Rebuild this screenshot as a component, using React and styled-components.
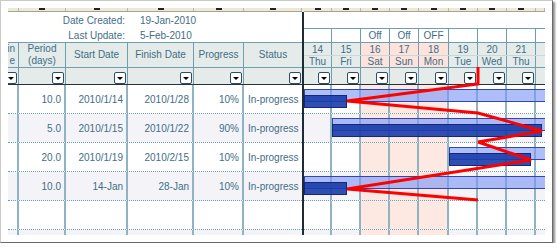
import React from 'react'
import styled, { createGlobalStyle } from 'styled-components'

const GlobalStyle = createGlobalStyle`
  html, body { margin: 0; padding: 0; background: #fff; }
`

const Frame = styled.div`
  box-sizing: border-box;
  width: 553px;
  height: 243px;
  padding: 7px;
  background: #fff;
  border: 1px solid #cacaca;
  border-right-color: #6a6a6a;
  border-bottom-color: #6a6a6a;
  box-shadow: 2px 2px 2px rgba(0, 0, 0, 0.45);
`

const Sheet = styled.div`
  position: relative;
  display: flex;
  width: 537px;
  height: 227px;
  overflow: hidden;
  font-family: "Liberation Sans", Arial, sans-serif;
  font-size: 10px;
  color: #3f6e87;
`

const Pane = styled.div`
  display: flex;
  flex-direction: column;
  flex-shrink: 0;
  width: ${p => p.w}px;
  overflow: hidden;
`

const Divider = styled.div`
  flex-shrink: 0;
  width: 2px;
  background: #1e2b36;
  border-top: 4px solid #ece9d8;
`

const Strip = styled.div`
  display: flex;
  flex-shrink: 0;
  height: 3px;
  background: #ece9d8;
  border-bottom: 1px solid #a5a28f;
`

const StripCell = styled.div`
  box-sizing: border-box;
  flex-shrink: 0;
  width: ${p => p.w}px;
  border-right: 1px solid #b9b6a4;
  display: flex;
  justify-content: center;
`

const Tick = styled.span`
  width: 6px;
  height: 2px;
  background: #222;
`

const Info = styled.div`
  display: grid;
  flex-shrink: 0;
  height: 30px;
  grid-template-rows: 16px 14px;
  grid-template-columns: 117px auto;
  column-gap: 15px;
  align-items: center;
  white-space: nowrap;
`

const InfoLabel = styled.span`
  text-align: right;
`

const HeaderRow = styled.div`
  display: flex;
  flex-shrink: 0;
  box-sizing: border-box;
  height: 25px;
  border-top: 1px solid #6f9db1;
  background: #e4ebe9;
`

const HeadCell = styled.div`
  box-sizing: border-box;
  flex-shrink: 0;
  width: ${p => p.w}px;
  border-right: ${p => (p.last ? 'none' : '1px solid #6f9db1')};
  display: flex;
  align-items: center;
  justify-content: ${p => (p.right ? 'flex-end' : 'center')};
  padding-right: ${p => (p.right ? '3px' : '0')};
  text-align: ${p => (p.right ? 'right' : 'center')};
  line-height: 12px;
  white-space: pre;
  overflow: hidden;
`

const FilterRow = styled.div`
  display: flex;
  flex-shrink: 0;
  box-sizing: border-box;
  height: 18px;
  border-top: 1px solid #6f9db1;
  border-bottom: 1px solid #26313a;
  background: #e4ebe9;
`

const FilterCell = styled.div`
  box-sizing: border-box;
  flex-shrink: 0;
  width: ${p => p.w}px;
  border-right: ${p => (p.last ? 'none' : '1px solid #6f9db1')};
  display: flex;
  justify-content: flex-end;
  align-items: flex-end;
  padding-right: 1px;
  overflow: hidden;
`

const DropButton = styled.span`
  box-sizing: border-box;
  flex-shrink: 0;
  width: 12px;
  height: 12px;
  background: #fff;
  border: 1px solid #2d4b6b;
  border-radius: 2px;
  display: flex;
  align-items: center;
  justify-content: center;

  &::after {
    content: '';
    border-left: 3px solid transparent;
    border-right: 3px solid transparent;
    border-top: 3px solid #000;
  }
`

const DataRow = styled.div`
  position: relative;
  display: flex;
  flex-shrink: 0;
  box-sizing: border-box;
  height: ${p => (p.short ? 5 : 29)}px;
  border-bottom: ${p => (p.short ? 'none' : '1px dotted #6f9db1')};
  background: ${p => (p.alt ? '#f4f4f8' : '#fff')};
`

const DataCell = styled.div`
  box-sizing: border-box;
  flex-shrink: 0;
  width: ${p => p.w}px;
  border-right: ${p => (p.last ? 'none' : '2px solid #8fb3c3')};
  background: ${p => (p.off ? '#fde8e2' : 'transparent')};
  display: flex;
  align-items: center;
  justify-content: ${p => (p.left ? 'flex-start' : 'flex-end')};
  padding: ${p => (p.left ? '0 0 0 4px' : '0 3px 0 0')};
  white-space: nowrap;
`

const BlankRow = styled.div`
  flex-shrink: 0;
  height: 16px;
`

const DayRow = styled.div`
  display: flex;
  flex-shrink: 0;
  box-sizing: border-box;
  height: ${p => p.h}px;
  border-top: 1px solid ${p => p.line};
`

const DayCell = styled.div`
  box-sizing: border-box;
  flex-shrink: 0;
  width: ${p => p.w}px;
  border-right: ${p => (p.last ? 'none' : '1px solid #6f9db1')};
  background: ${p => p.bg};
  display: flex;
  align-items: center;
  justify-content: center;
  line-height: 11px;
`

const Bar = styled.div`
  position: absolute;
  box-sizing: border-box;
  left: ${p => p.x}px;
  top: ${p => (p.plan ? 4 : 10)}px;
  width: ${p => p.w}px;
  height: 13px;
  background: ${p => (p.plan ? 'rgba(125, 150, 245, 0.62)' : 'rgba(25, 60, 170, 0.9)')};
  border: 1px solid ${p => (p.plan ? '#3545b0' : '#16267a')};
`

const Overlay = styled.svg`
  position: absolute;
  left: 0;
  top: 0;
  pointer-events: none;
`

const leftCols = [11, 47, 62, 66, 50, 58]
const dayCols = [28, 29, 29, 29, 30, 29, 29, 29, 9]

const days = [
  { d: '14', w: 'Thu' },
  { d: '15', w: 'Fri' },
  { d: '16', w: 'Sat', off: 'Off' },
  { d: '17', w: 'Sun', off: 'Off' },
  { d: '18', w: 'Mon', off: 'OFF' },
  { d: '19', w: 'Tue' },
  { d: '20', w: 'Wed' },
  { d: '21', w: 'Thu' },
  { d: '', w: '' },
]

const heads = ['in\ne', 'Period\n(days)', 'Start Date', 'Finish Date', 'Progress', 'Status']

const tasks = [
  { period: '10.0', start: '2010/1/14', finish: '2010/1/28', progress: '10%', plan: 0, done: 43 },
  { period: '5.0', start: '2010/1/15', finish: '2010/1/22', progress: '90%', plan: 28, done: 210 },
  { period: '20.0', start: '2010/1/19', finish: '2010/2/15', progress: '10%', plan: 145, done: 82 },
  { period: '10.0', start: '14-Jan', finish: '28-Jan', progress: '10%', plan: 0, done: 43 },
]

const redLine = '478,67 478,84 347,101 478,113 542,131 478,142 531,160 347,189 478,200'

const App = () => {
  const rows = [...tasks, null, null]
  return (
    <>
      <GlobalStyle />
      <Frame>
        <Sheet>
          <Pane w={294}>
            <Strip>
              {leftCols.map((w, i) => (
                <StripCell key={i} w={w}>{i > 0 && <Tick />}</StripCell>
              ))}
            </Strip>
            <Info>
              <InfoLabel>Date Created:</InfoLabel>
              <span>19-Jan-2010</span>
              <InfoLabel>Last Update:</InfoLabel>
              <span>5-Feb-2010</span>
            </Info>
            <HeaderRow>
              {leftCols.map((w, i) => (
                <HeadCell key={i} w={w} right={i === 0} last={i === 5}>{heads[i]}</HeadCell>
              ))}
            </HeaderRow>
            <FilterRow>
              {leftCols.map((w, i) => (
                <FilterCell key={i} w={w} last={i === 5}><DropButton /></FilterCell>
              ))}
            </FilterRow>
            {rows.map((t, r) => (
              <DataRow key={r} alt={r % 2 === 1} short={r === 5}>
                <DataCell w={leftCols[0]} />
                <DataCell w={leftCols[1]}>{t && t.period}</DataCell>
                <DataCell w={leftCols[2]}>{t && t.start}</DataCell>
                <DataCell w={leftCols[3]}>{t && t.finish}</DataCell>
                <DataCell w={leftCols[4]}>{t && t.progress}</DataCell>
                <DataCell w={leftCols[5]} left last>{t && 'In-progress'}</DataCell>
              </DataRow>
            ))}
          </Pane>
          <Divider />
          <Pane w={241}>
            <Strip>
              {dayCols.map((w, i) => (
                <StripCell key={i} w={w}>{i < 8 && <Tick />}</StripCell>
              ))}
            </Strip>
            <BlankRow />
            <DayRow h={14} line="#6f9db1">
              {days.map((d, i) => (
                <DayCell key={i} w={dayCols[i]} bg="#fff" last={i === 8}>{d.off}</DayCell>
              ))}
            </DayRow>
            <DayRow h={13} line="#6f9db1">
              {days.map((d, i) => (
                <DayCell key={i} w={dayCols[i]} bg={d.off ? '#fde3dc' : '#e4ebe9'} last={i === 8}>{d.d}</DayCell>
              ))}
            </DayRow>
            <DayRow h={12} line="#c9d8d8">
              {days.map((d, i) => (
                <DayCell key={i} w={dayCols[i]} bg={d.off ? '#fde3dc' : '#e4ebe9'} last={i === 8}>{d.w}</DayCell>
              ))}
            </DayRow>
            <FilterRow>
              {dayCols.map((w, i) => (
                <FilterCell key={i} w={w} last={i === 8}>{i < 8 && <DropButton />}</FilterCell>
              ))}
            </FilterRow>
            {rows.map((t, r) => (
              <DataRow key={r} alt={r % 2 === 1} short={r === 5}>
                {dayCols.map((w, i) => (
                  <DataCell key={i} w={w} off={!!days[i].off} last={i === 8} />
                ))}
                {t && <Bar plan x={t.plan} w={260 - t.plan} />}
                {t && <Bar x={t.plan} w={t.done} />}
              </DataRow>
            ))}
          </Pane>
          <Overlay width="537" height="227" viewBox="8 8 537 227">
            <polyline points={redLine} fill="none" stroke="#ff0000" strokeWidth="3" strokeLinejoin="miter" />
          </Overlay>
        </Sheet>
      </Frame>
    </>
  )
}

export default App
